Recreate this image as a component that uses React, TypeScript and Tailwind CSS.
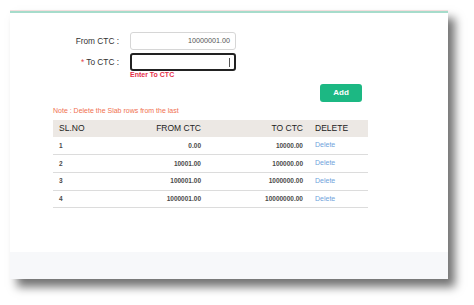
const rows = [
  { sl: 1, from: '0.00', to: '10000.00' },
  { sl: 2, from: '10001.00', to: '100000.00' },
  { sl: 3, from: '100001.00', to: '1000000.00' },
  { sl: 4, from: '1000001.00', to: '10000000.00' },
]

export default function App() {
  return (
    <div className="h-[305px] w-[474px] bg-white pl-[10px] pt-[10px] font-['Liberation_Sans',Arial,sans-serif]">
      <div className="flex h-[269px] w-[438px] flex-col border-t border-[#f3dede] bg-white shadow-[7px_8px_9px_rgba(0,0,0,0.55)]">
        <div className="h-[2px] bg-[#a6dccb]" />
        <div className="flex-1">
          {/* form */}
          <div className="mt-[19px] flex items-center">
            <label className="w-[109px] text-right text-[8.3px] text-[#333]">From CTC :</label>
            <div className="ml-[11px] flex h-[18px] w-[106px] items-center justify-end rounded-[3px] border border-[#d6d6d6] pr-[5px] text-[7.2px] text-[#555]">
              10000001.00
            </div>
          </div>
          <div className="mt-[3px] flex items-center">
            <label className="w-[109px] text-right text-[8.3px] text-[#333]">
              <span className="text-[#e5484d]">*</span> To CTC :
            </label>
            <div className="ml-[11px] flex h-[18px] w-[106px] items-center justify-end rounded-[3px] border-2 border-[#222] pr-[4px]">
              <span className="h-[9px] w-[1px] bg-[#555]" />
            </div>
          </div>
          <div className="ml-[120px] mt-[-1px] text-[7px] font-semibold leading-[10px] text-[#e5304a]">Enter To CTC</div>

          <div className="ml-[310px] mt-[4px] flex">
            <button className="h-[18px] w-[42px] rounded-[3px] bg-[#1cb883] text-[8px] font-bold leading-none text-white">Add</button>
          </div>

          <div className="ml-[43px] mt-[4px] text-[7px] leading-[10px] text-[#f0704f]">Note : Delete the Slab rows from the last</div>

          {/* table */}
          <table className="ml-[43px] mt-[4px] w-[315px] border-collapse">
            <thead>
              <tr className="h-[17px] bg-[#ece8e4] text-[8.5px] text-[#222]">
                <th className="w-[50px] pl-[6px] text-left font-normal">SL.NO</th>
                <th className="w-[98px] text-right font-normal">FROM CTC</th>
                <th className="w-[102px] text-right font-normal">TO CTC</th>
                <th className="pl-[12px] text-left font-normal">DELETE</th>
              </tr>
            </thead>
            <tbody>
              {rows.map((r) => (
                <tr key={r.sl} className="h-[17.7px] border-b border-[#dcdcdc] text-[6.5px] font-semibold text-[#4a4a4a]">
                  <td className="pl-[6px]">{r.sl}</td>
                  <td className="text-right">{r.from}</td>
                  <td className="text-right">{r.to}</td>
                  <td className="pl-[12px] text-[7px] font-normal text-[#6fa3dc]">Delete</td>
                </tr>
              ))}
            </tbody>
          </table>
        </div>
        <div className="h-[27px] bg-[#f7f8fa]" />
      </div>
    </div>
  )
}
